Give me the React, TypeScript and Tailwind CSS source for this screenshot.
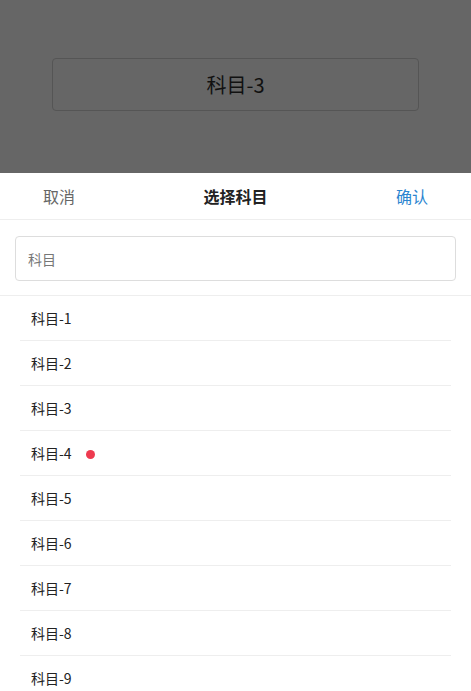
import { useState } from "react";

const subjects = Array.from({ length: 9 }, (_, i) => `科目-${i + 1}`);

export default function App() {
  const [query, setQuery] = useState("");

  return (
    <div
      className="relative h-[691px] w-[471px] overflow-hidden bg-white"
      style={{ fontFamily: '"Noto Sans CJK SC", "Noto Sans", sans-serif' }}
    >
      {/* dimmed page behind the sheet */}
      <div className="flex h-[173px] items-start justify-center bg-[#666666] pt-[58px]">
        <div className="flex h-[53px] w-[367px] items-center justify-center rounded-[4px] border border-[#555555] text-[20px] text-[#111]">
          科目-3
        </div>
      </div>

      <div className="flex flex-col">
        <div className="flex h-[47px] items-center justify-between border-b border-[#eeeeee] px-[43px] text-[16px]">
          <button type="button" className="text-[#666]">
            取消
          </button>
          <span className="text-[16px] font-bold text-[#222]">选择科目</span>
          <button type="button" className="text-[#2b85d0]">
            确认
          </button>
        </div>

        <div className="border-b border-[#eeeeee] px-[15px] pt-[16px] pb-[14px]">
          <input
            value={query}
            onChange={(e) => setQuery(e.target.value)}
            placeholder="科目"
            className="h-[45px] w-full rounded-[4px] border border-[#dddddd] px-[12px] text-[14px] text-[#333] outline-none placeholder:text-[#777]"
          />
        </div>

        <ul className="px-[20px]">
          {subjects.map((s, i) => (
            <li
              key={s}
              className="flex h-[45px] items-center border-b border-[#eeeeee] pl-[11px] text-[14px] text-[#222]"
            >
              {s}
              {i === 3 && (
                <span className="ml-[14px] mt-[3px] h-[9px] w-[9px] rounded-full bg-[#ee3a4f]" />
              )}
            </li>
          ))}
        </ul>
      </div>
    </div>
  );
}
